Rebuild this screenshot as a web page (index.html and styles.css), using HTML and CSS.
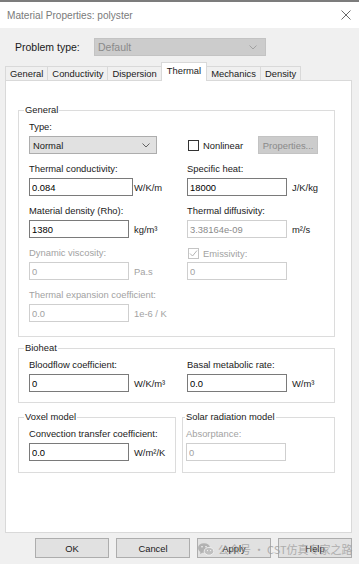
FILE: index.html
```html
<!DOCTYPE html>
<html lang="en">
<head>
  <meta charset="UTF-8">
  <meta name="viewport" content="width=device-width, initial-scale=1.0">
  <title>Material Properties: polyster</title>
  <link rel="stylesheet" href="styles.css">
</head>
<body>
  <div class="titlebar">
    <span class="title">Material Properties: polyster</span>
    <svg class="close" width="10" height="10" viewBox="0 0 10 10">
      <path d="M0.5 0.5L9.5 9.5M9.5 0.5L0.5 9.5" />
    </svg>
  </div>

  <div class="problem-row">
    <span class="problem-label">Problem type:</span>
    <div class="combo combo-problem disabled">
      <span>Default</span>
      <svg class="chev" width="8" height="5" viewBox="0 0 8 5"><path d="M0.5 0.5L4 4L7.5 0.5" /></svg>
    </div>
  </div>

  <div class="tabs">
    <div class="tab">General</div>
    <div class="tab">Conductivity</div>
    <div class="tab">Dispersion</div>
    <div class="tab active">Thermal</div>
    <div class="tab">Mechanics</div>
    <div class="tab">Density</div>
  </div>

  <div class="panel">
    <fieldset class="group">
      <legend>General</legend>
      <div class="grid">
        <div class="cell">
          <label>Type:</label>
          <div class="combo combo-type">
            <span>Normal</span>
            <svg class="chev" width="8" height="5" viewBox="0 0 8 5"><path d="M0.5 0.5L4 4L7.5 0.5" /></svg>
          </div>
        </div>
        <div class="cell check-row">
          <span class="check"></span>
          <span class="check-label">Nonlinear</span>
          <button class="btn props" disabled>Properties...</button>
        </div>

        <div class="cell">
          <label>Thermal conductivity:</label>
          <div class="field">
            <input class="edit wide" value="0.084">
            <span class="unit tight">W/K/m</span>
          </div>
        </div>
        <div class="cell">
          <label>Specific heat:</label>
          <div class="field">
            <input class="edit" value="18000">
            <span class="unit">J/K/kg</span>
          </div>
        </div>

        <div class="cell">
          <label>Material density (Rho):</label>
          <div class="field">
            <input class="edit" value="1380">
            <span class="unit">kg/m³</span>
          </div>
        </div>
        <div class="cell">
          <label>Thermal diffusivity:</label>
          <div class="field">
            <input class="edit readonly" value="3.38164e-09" readonly>
            <span class="unit">m²/s</span>
          </div>
        </div>

        <div class="cell">
          <label class="off">Dynamic viscosity:</label>
          <div class="field">
            <input class="edit" value="0" disabled>
            <span class="unit off">Pa.s</span>
          </div>
        </div>
        <div class="cell">
          <div class="check-line">
            <span class="check checked off">
              <svg width="9" height="9" viewBox="0 0 9 9"><path d="M1 4.5L3.5 7L8 1.5" /></svg>
            </span>
            <span class="check-label off">Emissivity:</span>
          </div>
          <div class="field">
            <input class="edit" value="0" disabled>
          </div>
        </div>

        <div class="cell">
          <label class="off">Thermal expansion coefficient:</label>
          <div class="field">
            <input class="edit" value="0.0" disabled>
            <span class="unit off">1e-6 / K</span>
          </div>
        </div>
      </div>
    </fieldset>

    <fieldset class="group bioheat">
      <legend>Bioheat</legend>
      <div class="grid">
        <div class="cell">
          <label>Bloodflow coefficient:</label>
          <div class="field">
            <input class="edit" value="0">
            <span class="unit">W/K/m³</span>
          </div>
        </div>
        <div class="cell">
          <label>Basal metabolic rate:</label>
          <div class="field">
            <input class="edit" value="0.0">
            <span class="unit">W/m³</span>
          </div>
        </div>
      </div>
    </fieldset>

    <div class="pair">
      <fieldset class="group voxel">
        <legend>Voxel model</legend>
        <label>Convection transfer coefficient:</label>
        <div class="field">
          <input class="edit" value="0.0">
          <span class="unit">W/m²/K</span>
        </div>
      </fieldset>
      <fieldset class="group solar">
        <legend>Solar radiation model</legend>
        <label class="off">Absorptance:</label>
        <div class="field">
          <input class="edit" value="0" disabled>
        </div>
      </fieldset>
    </div>
  </div>

  <div class="buttons">
    <button class="btn">OK</button>
    <button class="btn">Cancel</button>
    <button class="btn">Apply</button>
    <button class="btn">Help</button>
  </div>

  <!-- 公眾號水印 -->
  <div class="watermark">
    <svg width="16" height="13" viewBox="0 0 16 13">
      <ellipse cx="6" cy="5" rx="6" ry="4.8" fill="#a3a3a3" />
      <path d="M2.5 8.5L2 11L5 9.5Z" fill="#a3a3a3" />
      <ellipse cx="11" cy="8.3" rx="4.8" ry="3.9" fill="#b5b5b5" stroke="#fff" stroke-width="0.8" />
      <circle cx="4" cy="3.8" r="0.8" fill="#fff" />
      <circle cx="8" cy="3.8" r="0.8" fill="#fff" />
      <circle cx="9.5" cy="7.6" r="0.6" fill="#fff" />
      <circle cx="12.6" cy="7.6" r="0.6" fill="#fff" />
    </svg>
    <span>公众号 · CST仿真专家之路</span>
  </div>
</body>
</html>
```

FILE: styles.css
```css
/* 視窗 */
body {
  margin: 0;
  width: 359px;
  height: 564px;
  overflow: hidden;
  position: relative;
  background: #f0f0f0;
  font-family: "Liberation Sans", Arial, sans-serif;
  font-size: 9.4px;
  color: #1a1a1a;
}

.titlebar {
  height: 26px;
  background: #fff;
  border-top: 2px solid #7c7c7c;
  display: flex;
  align-items: center;
  justify-content: space-between;
  padding: 0 8px 0 7px;
}

.title {
  font-size: 10.1px;
  color: #7a7a7a;
}

.close path {
  stroke: #6a6a6a;
  stroke-width: 1;
  fill: none;
}

.problem-row {
  display: flex;
  align-items: center;
  padding: 10px 0 0 15px;
}

.problem-label {
  width: 79px;
  font-size: 10.5px;
}

/* 下拉框 */
.combo {
  box-sizing: border-box;
  height: 18px;
  display: flex;
  align-items: center;
  justify-content: space-between;
  padding: 0 6px 0 3px;
  background: #e1e1e1;
  border: 1px solid #adadad;
}

.chev path {
  stroke: #555;
  stroke-width: 0.9;
  fill: none;
}

.combo.disabled {
  background: #cccccc;
  border-color: #c3c3c3;
  color: #8a8a8a;
}

.combo.disabled .chev path {
  stroke: #9c9c9c;
}

.combo-problem {
  width: 172px;
  font-size: 10.5px;
  padding-right: 8px;
}

.combo-type {
  width: 128px;
}

/* 分頁 */
.tabs {
  display: flex;
  align-items: flex-end;
  padding-left: 5px;
  margin-top: 6px;
  margin-bottom: -1px;
  position: relative;
  z-index: 1;
}

.tab {
  box-sizing: border-box;
  height: 14px;
  margin-bottom: 1px;
  margin-left: -1px;
  padding: 0 4px;
  line-height: 13px;
  border: 1px solid #d9d9d9;
  border-bottom: none;
  background: #f0f0f0;
}

.tab:first-child {
  margin-left: 0;
}

.tab.active {
  height: 19px;
  margin-bottom: 0;
  padding: 0 5px;
  line-height: 15px;
  background: #fff;
}

.panel {
  box-sizing: border-box;
  height: 453px;
  margin: 0 7px 0 5px;
  padding: 23px 16px 0 12px;
  background: #fff;
  border: 1px solid #d9d9d9;
}

/* 分組框 */
.group {
  margin: 0;
  padding: 5px 0 14px 10px;
  border: 1px solid #dcdcdc;
  min-width: 0;
}

.group legend {
  margin-left: -5px;
  padding: 0 1px;
  line-height: 12px;
}

.grid {
  display: grid;
  grid-template-columns: 158px 1fr;
  row-gap: 9px;
}

label {
  display: block;
  line-height: 12px;
  margin-bottom: 3px;
}

.off {
  color: #a2a2a2;
}

.field {
  display: flex;
  align-items: center;
  height: 18px;
}

.edit {
  box-sizing: border-box;
  width: 100px;
  height: 18px;
  margin: 0;
  padding: 0 2px;
  border: 1px solid #7a7a7a;
  background: #fff;
  font: inherit;
  color: #000;
  outline: none;
}

.edit.wide {
  width: 104px;
}

.edit.readonly {
  border-color: #cfcfcf;
  color: #8a8a8a;
}

.edit:disabled {
  border-color: #cfcfcf;
  background: #fff;
  color: #a2a2a2;
}

.unit {
  margin-left: 5px;
}

.unit.tight {
  margin-left: 1px;
}

/* 核取方塊 */
.check-row {
  display: flex;
  align-items: center;
  align-self: end;
  height: 18px;
}

.check-line {
  display: flex;
  align-items: center;
  height: 12px;
  margin-bottom: 3px;
}

.check {
  box-sizing: border-box;
  width: 11px;
  height: 11px;
  margin-left: 1px;
  border: 1px solid #333;
  background: #fff;
  display: flex;
  align-items: center;
  justify-content: center;
}

.check.off {
  border-color: #c4c4c4;
}

.check svg path {
  stroke: #b4b4b4;
  stroke-width: 1;
  fill: none;
}

.check-label {
  margin-left: 4px;
}

.btn {
  box-sizing: border-box;
  margin: 0;
  padding: 0;
  font: inherit;
  color: #1a1a1a;
  background: #e1e1e1;
  border: 1px solid #adadad;
}

.btn:disabled {
  background: #cccccc;
  border-color: #c3c3c3;
  color: #8a8a8a;
}

.props {
  width: 60px;
  height: 18px;
  margin-left: 15px;
}

.bioheat {
  margin-top: 5px;
  padding-bottom: 10px;
}

.pair {
  display: flex;
  gap: 6px;
  margin-top: 8px;
}

.voxel {
  width: 158px;
  box-sizing: border-box;
  padding-bottom: 11px;
}

.solar {
  flex: 1;
  padding: 5px 0 11px 3px;
}

.solar legend {
  margin-left: -1px;
}

/* 底部按鈕 */
.buttons {
  display: flex;
  justify-content: flex-end;
  gap: 7px;
  padding: 5px 7px 0 0;
}

.buttons .btn {
  width: 74px;
  height: 20px;
}

.watermark {
  position: absolute;
  left: 198px;
  top: 541px;
  display: flex;
  align-items: center;
  gap: 4px;
  opacity: 0.75;
  pointer-events: none;
}

.watermark span {
  font-family: "Noto Sans CJK SC", "Liberation Sans", sans-serif;
  font-size: 11px;
  color: #9c9c9c;
}
```
